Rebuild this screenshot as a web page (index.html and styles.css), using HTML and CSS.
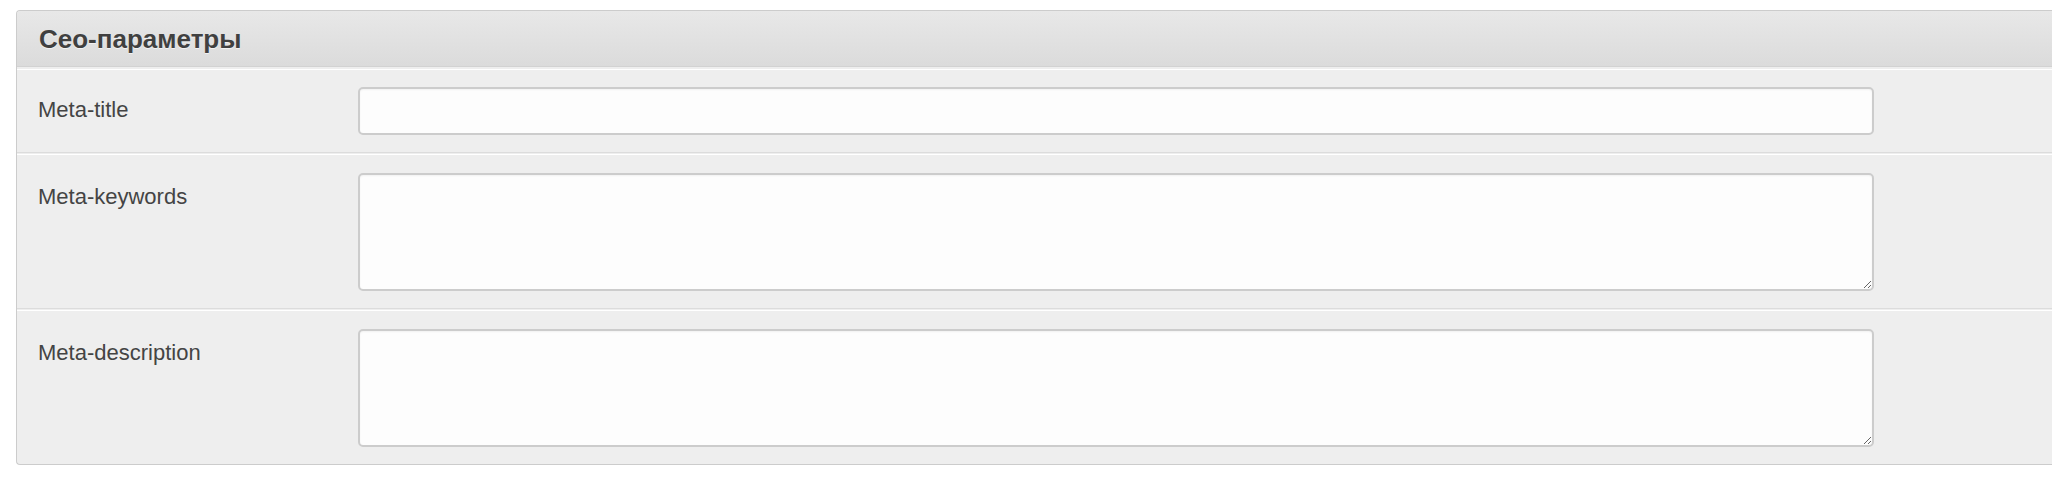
FILE: index.html
```html
<!DOCTYPE html>
<html lang="ru">
<head>
<meta charset="utf-8">
<title>Сео-параметры</title>
<link rel="stylesheet" href="styles.css">
</head>
<body>
<div class="panel">
  <div class="panel-head">Сео-параметры</div>
  <div class="panel-body">
    <div class="row row-input">
      <label class="label" for="mt">Meta-title</label>
      <input class="field" id="mt" type="text">
    </div>
    <div class="row row-area">
      <label class="label" for="mk">Meta-keywords</label>
      <textarea class="field area" id="mk"></textarea>
    </div>
    <div class="row row-area last">
      <label class="label" for="md">Meta-description</label>
      <textarea class="field area" id="md"></textarea>
    </div>
  </div>
</div>
</body>
</html>
```

FILE: styles.css
```css
html, body {
  margin: 0;
  padding: 0;
  overflow: hidden;
  background: #ffffff;
}
body {
  font-family: "Liberation Sans", Arial, sans-serif;
  color: #444444;
}
.panel {
  margin: 10px 0 0 16px;
  width: 2080px;
  border: 1px solid #cccccc;
  border-right: none;
  border-radius: 4px 0 0 4px;
  background: #eeeeee;
  overflow: hidden;
}
.panel-head {
  box-sizing: border-box;
  height: 56px;
  padding-top: 1px;
  line-height: 55px;
  padding-left: 22px;
  font-size: 26px;
  font-weight: bold;
  color: #404040;
  text-shadow: 0 1px 0 rgba(255,255,255,0.6);
  background: linear-gradient(to bottom, #e8e8e8, #dbdbdb);
  border-bottom: 1px solid #d2d2d2;
}
.panel-body {
  padding-top: 2px;
}
.row {
  display: flex;
  align-items: flex-start;
  padding-left: 21px;
  padding-bottom: 17px;
  border-top: 1px solid #ffffff;
  border-bottom: 1px solid #dcdcdc;
  margin-bottom: 1px;
}
.row.last {
  border-bottom: none;
  margin-bottom: 0;
}
.row-input {
  padding-top: 17px;
}
.row-area {
  padding-top: 18px;
}
.label {
  flex: 0 0 320px;
  font-size: 22px;
  line-height: 30px;
  padding-top: 8px;
  color: #444444;
}
.row-area .label {
  padding-top: 9px;
}
.field {
  box-sizing: border-box;
  width: 1516px;
  height: 48px;
  margin: 0;
  padding: 6px 10px;
  border: 2px solid #cccccc;
  border-radius: 5px;
  background: #fdfdfd;
  box-shadow: inset 0 1px 2px rgba(0,0,0,0.05);
  font-family: "Liberation Sans", Arial, sans-serif;
  font-size: 20px;
  color: #444444;
  outline: none;
}
.area {
  height: 118px;
  resize: vertical;
  display: block;
}
```
